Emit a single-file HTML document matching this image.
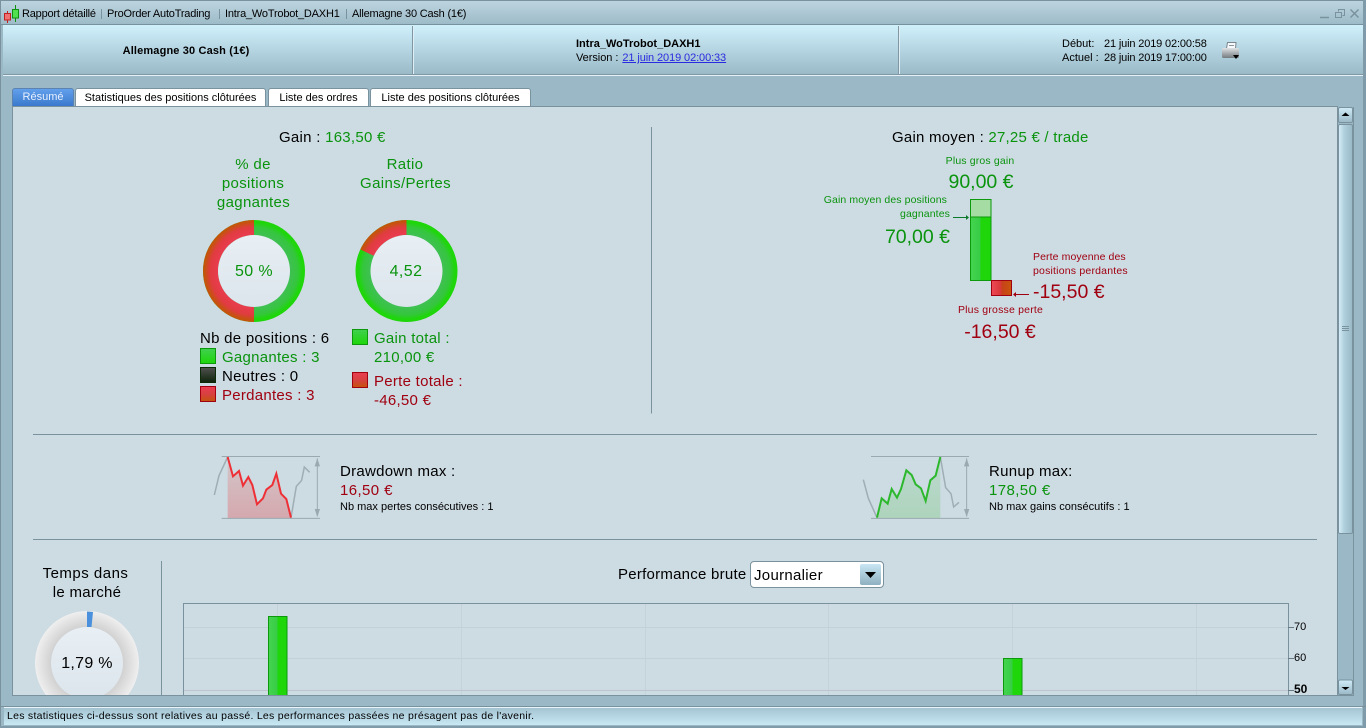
<!DOCTYPE html>
<html lang="fr"><head><meta charset="utf-8"><title>Rapport détaillé</title>
<style>
html,body{margin:0;padding:0;width:1366px;height:728px;overflow:hidden;background:#9ab8c6;font-family:"Liberation Sans",Arial,sans-serif;color:#000}
.a{position:absolute}
.t{position:absolute;white-space:nowrap;line-height:16px;height:16px}
.c{text-align:center;transform:translateX(-50%)}
.r{transform:translateX(-100%)}
.g{color:#0a940e}.d{color:#a00010}
.m{font-size:15px;letter-spacing:.27px}
.s{font-size:10.500px;letter-spacing:.1px}
.b{font-size:19.500px}
.h{font-size:11px;letter-spacing:-.2px}
.tab{position:absolute;top:88px;height:18px;box-sizing:border-box;border:1px solid #7a929e;border-bottom:none;border-radius:3px 3px 0 0;background:#fff;font-size:11px;line-height:18px;text-align:center}
</style></head><body>
<div class="a" style="left:0;top:0;width:1366px;height:728px;background:#9ab8c6"></div>
<div class="a" style="left:0;top:0;width:1366px;height:24px;background:linear-gradient(#bcd4df,#9ebbc9);border-top:1px solid #7a929e;box-sizing:border-box"></div>
<div class="a" style="left:0;top:24px;width:1366px;height:1px;background:#76909c"></div>
<div class="a" style="left:3px;top:25px;width:1360px;height:49px;background:linear-gradient(#d0f0fc,#9bbac8)"></div>
<div class="a" style="left:3px;top:74px;width:1360px;height:1px;background:#7f98a4"></div>
<div class="a" style="left:3px;top:75px;width:1360px;height:1px;background:#e4f2f8"></div>
<div class="a" style="left:412px;top:26px;width:1px;height:48px;background:#7f98a4;border-right:1px solid #e0eff6"></div>
<div class="a" style="left:898px;top:26px;width:1px;height:48px;background:#7f98a4;border-right:1px solid #e0eff6"></div>
<div class="a" style="left:0;top:0;width:1px;height:728px;background:#7a929e"></div>
<div class="a" style="left:1363px;top:0;width:3px;height:728px;background:#7f9aa8"></div>
<div class="a" style="left:0;top:726px;width:1366px;height:2px;background:#7f9aa8"></div>

<!-- title bar -->
<svg class="a" style="left:0;top:0" width="24" height="24"><path d="M7.500 11v12" stroke="#c02020"/><rect x="4.500" y="13.500" width="6" height="6.500" fill="#f07070" stroke="#c02020"/><path d="M15.500 5v17" stroke="#109010"/><rect x="12.500" y="9.500" width="6" height="8.500" fill="#50e050" stroke="#109010"/></svg>
<div class="t h" style="left:22px;top:6px">Rapport détaillé</div>
<div class="a" style="left:101px;top:9px;width:1px;height:10px;background:#7a929e"></div>
<div class="t h" style="left:107px;top:6px">ProOrder AutoTrading</div>
<div class="a" style="left:219px;top:9px;width:1px;height:10px;background:#7a929e"></div>
<div class="t h" style="left:225px;top:6px">Intra_WoTrobot_DAXH1</div>
<div class="a" style="left:346px;top:9px;width:1px;height:10px;background:#7a929e"></div>
<div class="t h" style="left:352px;top:6px">Allemagne 30 Cash (1€)</div>
<svg class="a" style="left:1315px;top:5px" width="48" height="16" fill="none" stroke="#7a929e" stroke-width="1.500"><path d="M5 12.500h9"/><path d="M23.500 6.500v-2h6v6h-2M20.500 7.500h6v5h-6z" stroke-width="1"/><path d="M35.500 4.500l8 8M43.500 4.500l-8 8"/></svg>

<!-- header -->
<div class="t c" style="left:186px;top:43px;font-size:11px;font-weight:bold;letter-spacing:.15px">Allemagne 30 Cash (1€)</div>
<div class="t" style="left:576px;top:36px;font-size:11px;font-weight:bold">Intra_WoTrobot_DAXH1</div>
<div class="t" style="left:576px;top:50px;font-size:11px;letter-spacing:-.05px">Version : <span style="color:#2a2ae0;text-decoration:underline;letter-spacing:-.1px;margin-left:1px">21 juin 2019 02:00:33</span></div>
<div class="t" style="left:1062px;top:36px;font-size:11px">Début:</div>
<div class="t" style="left:1104px;top:36px;font-size:11px;letter-spacing:-.15px">21 juin 2019 02:00:58</div>
<div class="t" style="left:1062px;top:50px;font-size:11px">Actuel :</div>
<div class="t" style="left:1104px;top:50px;font-size:11px;letter-spacing:-.15px">28 juin 2019 17:00:00</div>
<svg class="a" style="left:1220px;top:41px" width="22" height="20"><defs><linearGradient id="pb" x1="0" y1="0" x2="0" y2="1"><stop offset="0" stop-color="#dfe3e5"/><stop offset=".55" stop-color="#a2a8ab"/><stop offset="1" stop-color="#747b7e"/></linearGradient></defs><path d="M7.500 1.500h8.500l-.5 6h-9z" fill="#f6f8f9" stroke="#7a868d"/><path d="M9 4.500h5" stroke="#8b979e"/><rect x="2" y="7" width="17" height="10" rx="1.500" fill="url(#pb)"/><path d="M13 14h6l-3 4z" fill="#000"/></svg>

<!-- tabs -->
<div class="tab" style="left:12px;width:62px;background:linear-gradient(#62a0ec,#3a78cc);border-color:#5b82b0;color:#e8f0ff;line-height:16px">Résumé</div>
<div class="tab" style="left:75px;width:191px">Statistiques des positions clôturées</div>
<div class="tab" style="left:268px;width:101px">Liste des ordres</div>
<div class="tab" style="left:370px;width:161px">Liste des positions clôturées</div>

<!-- panel -->
<div class="a" style="left:12px;top:106px;width:1326px;height:590px;box-sizing:border-box;background:#cddbe3;border:1px solid #7a929e"></div>
<div class="a" style="left:1338px;top:107px;width:15px;height:588px;background:#9ab8c6;border-right:1px solid #7a929e;box-sizing:content-box"></div>
<div class="a" style="left:12px;top:695px;width:1342px;height:1px;background:#7a929e"></div>

<svg class="a" style="left:0;top:0" width="1366" height="728">
<defs>
<clipPath id="p"><rect x="13" y="107" width="1325" height="588"/></clipPath>
<radialGradient id="g1" gradientUnits="userSpaceOnUse" cx="254" cy="271" r="51"><stop offset=".7" stop-color="#40c054"/><stop offset=".86" stop-color="#34c63c"/><stop offset=".95" stop-color="#1ed60a"/><stop offset="1" stop-color="#1ed60a"/></radialGradient>
<radialGradient id="r1" gradientUnits="userSpaceOnUse" cx="254" cy="271" r="51"><stop offset=".7" stop-color="#ea3c50"/><stop offset=".86" stop-color="#e03c40"/><stop offset=".97" stop-color="#c4540c"/><stop offset="1" stop-color="#c4540c"/></radialGradient>
<radialGradient id="g2" gradientUnits="userSpaceOnUse" cx="406.500" cy="271" r="51"><stop offset=".7" stop-color="#40c054"/><stop offset=".86" stop-color="#34c63c"/><stop offset=".95" stop-color="#1ed60a"/><stop offset="1" stop-color="#1ed60a"/></radialGradient>
<radialGradient id="r2" gradientUnits="userSpaceOnUse" cx="406.500" cy="271" r="51"><stop offset=".7" stop-color="#ea3c50"/><stop offset=".86" stop-color="#e03c40"/><stop offset=".97" stop-color="#c4540c"/><stop offset="1" stop-color="#c4540c"/></radialGradient>
<radialGradient id="rw" cx=".5" cy=".5" r=".5"><stop offset=".68" stop-color="#d0d0d0"/><stop offset="1" stop-color="#efefef"/></radialGradient>
<linearGradient id="in" x1="0" y1="0" x2="0" y2="1"><stop offset="0" stop-color="#e8eff5"/><stop offset="1" stop-color="#dbe5eb"/></linearGradient>
<linearGradient id="sg" x1="0" y1="0" x2="0" y2="1"><stop offset="0" stop-color="#40d050"/><stop offset="1" stop-color="#1ed60a"/></linearGradient>
<linearGradient id="sr" x1="0" y1="0" x2="0" y2="1"><stop offset="0" stop-color="#ea3c50"/><stop offset=".5" stop-color="#d84040"/><stop offset="1" stop-color="#c4540c"/></linearGradient>
<linearGradient id="sk" x1="0" y1="0" x2="0" y2="1"><stop offset="0" stop-color="#505050"/><stop offset="1" stop-color="#0e240a"/></linearGradient>
<linearGradient id="bg" x1="0" y1="0" x2="1" y2="0"><stop offset="0" stop-color="#46d450"/><stop offset=".48" stop-color="#36cc44"/><stop offset=".5" stop-color="#1ed60a"/><stop offset="1" stop-color="#1ed60a"/></linearGradient>
<linearGradient id="br" x1="0" y1="0" x2="1" y2="0"><stop offset="0" stop-color="#ee4858"/><stop offset=".48" stop-color="#d83838"/><stop offset=".5" stop-color="#c8401c"/><stop offset="1" stop-color="#c8560c"/></linearGradient>
<linearGradient id="ar" x1="0" y1="0" x2="0" y2="1"><stop offset="0" stop-color="#d8a8a8" stop-opacity=".4"/><stop offset="1" stop-color="#d4a8ae"/></linearGradient>
<linearGradient id="ag" x1="0" y1="0" x2="0" y2="1"><stop offset="0" stop-color="#a8d4b8" stop-opacity=".4"/><stop offset="1" stop-color="#aed4bc"/></linearGradient>
<linearGradient id="sb" x1="0" y1="0" x2="1" y2="0"><stop offset="0" stop-color="#d8eef8"/><stop offset=".4" stop-color="#b0d0de"/><stop offset="1" stop-color="#9ab8c6"/></linearGradient>
<linearGradient id="sq" x1="0" y1="0" x2="0" y2="1"><stop offset="0" stop-color="#d0ecf8"/><stop offset="1" stop-color="#9ab8c6"/></linearGradient>
</defs>

<!-- donut 1 -->
<circle cx="254" cy="271" r="51" fill="url(#g1)"/>
<path d="M254 220A51 51 0 0 0 254 322V307A36 36 0 0 1 254 235Z" fill="url(#r1)"/>
<circle cx="254" cy="271" r="36" fill="url(#in)"/>
<!-- donut 2 -->
<circle cx="406.500" cy="271" r="51" fill="url(#g2)"/>
<path d="M406.500 220A51 51 0 0 0 360.300 249.500L373.900 255.800A36 36 0 0 1 406.500 235Z" fill="url(#r2)"/>
<circle cx="406.500" cy="271" r="36" fill="url(#in)"/>

<!-- swatches -->
<rect x="200.500" y="348.500" width="15" height="15" fill="url(#sg)" stroke="#0c9a0c"/>
<rect x="200.500" y="367.500" width="15" height="15" fill="url(#sk)" stroke="#0a2a08"/>
<rect x="200.500" y="386.500" width="15" height="15" fill="url(#sr)" stroke="#a00010"/>
<rect x="352.500" y="329.500" width="15" height="15" fill="url(#sg)" stroke="#0c9a0c"/>
<rect x="352.500" y="372.500" width="15" height="15" fill="url(#sr)" stroke="#a00010"/>

<!-- dividers -->
<path d="M651.500 127V413.500" stroke="#7a929e"/>
<path d="M33 434.500H1317M33 539.500H1317" stroke="#7a929e"/>
<path d="M161.500 561V695" stroke="#7a929e"/>

<!-- bars -->
<rect x="970.500" y="199.500" width="20.500" height="17.500" fill="#a4dca4" stroke="#0c9a0c"/>
<rect x="970.500" y="217" width="20.500" height="63.500" fill="url(#bg)" stroke="#0c9a0c"/>
<rect x="991.500" y="280.500" width="20" height="15" fill="url(#br)" stroke="#a00010"/>
<path d="M953 217.500H967" stroke="#0a7a2a"/><path d="M969 217.500l-3-2.500v5z" fill="#0a7a2a"/>
<path d="M1029 294.500H1016" stroke="#a00010"/><path d="M1013 294.500l3-2.500v5z" fill="#a00010"/>

<!-- drawdown -->
<g transform="translate(205 445) scale(.3333)">
<path d="M68 36L84 94 102 78 114 122 130 96 142 120 156 178 174 160 184 134 202 120 214 86 228 146 244 162 258 218V220H68Z" fill="url(#ar)"/>
<path d="M50 34.500H345M50 220H345" stroke="#9aa8b0" stroke-width="3" fill="none"/>
<path d="M28 150L42 92 68 36M258 218L274 124 290 106 298 66 314 82" stroke="#9fadb4" stroke-width="4.500" fill="none"/>
<path d="M68 36L84 94 102 78 114 122 130 96 142 120 156 178 174 160 184 134 202 120 214 86 228 146 244 162 258 218" stroke="#ee3036" stroke-width="6" fill="none"/>
<path d="M337 40V214" stroke="#9aa8b0" stroke-width="3"/><path d="M337 40l-8 24h16zM337 216l-8-24h16z" fill="#9aa8b0"/>
</g>
<!-- runup -->
<g transform="translate(855 445) scale(.3333)">
<path d="M66 218L80 160 98 176 110 132 126 158 138 132 154 76 170 90 182 118 198 130 212 168 226 106 242 92 256 36V220H66Z" fill="url(#ag)"/>
<path d="M48 34.500H342M48 220H342" stroke="#9aa8b0" stroke-width="3" fill="none"/>
<path d="M25 104L40 160 66 218M256 36L272 128 288 146 296 186 312 172" stroke="#9fadb4" stroke-width="4.500" fill="none"/>
<path d="M66 218L80 160 98 176 110 132 126 158 138 132 154 76 170 90 182 118 198 130 212 168 226 106 242 92 256 36" stroke="#2cb82c" stroke-width="6" fill="none"/>
<path d="M335 40V214" stroke="#9aa8b0" stroke-width="3"/><path d="M335 40l-8 24h16zM335 216l-8-24h16z" fill="#9aa8b0"/>
</g>

<g clip-path="url(#p)">
<!-- market ring -->
<circle cx="87" cy="663" r="52" fill="url(#rw)"/>
<path d="M87 611.500 L93 612 L91.500 627 H87Z" fill="#4a90dc"/>
<circle cx="87" cy="663" r="36" fill="url(#in)"/>
<!-- chart -->
<path d="M277.500 604V695M461.500 604V695M645.500 604V695M828.500 604V695M1012.500 604V695M1196.500 604V695" stroke="#c6d2d9"/>
<path d="M184 627.500H1288M184 658.500H1288" stroke="#c2d0d8"/>
<path d="M184 690.500H1288" stroke="#bcc4cc"/>
<rect x="183.500" y="603.500" width="1105" height="100" fill="none" stroke="#7a929e"/>
<path d="M1288 627.500h6M1288 658.500h6M1288 690.500h6" stroke="#6a7a84"/>
<rect x="268.500" y="616.500" width="18.500" height="90" fill="url(#bg)" stroke="#0c9a0c"/>
<rect x="1003.500" y="658.500" width="18.500" height="50" fill="url(#bg)" stroke="#0c9a0c"/>
</g>

<!-- scrollbar -->
<rect x="1338.500" y="107.500" width="14" height="15" rx="1.500" fill="url(#sq)" stroke="#7a929e"/>
<path d="M1345.500 112.500l-4 3.500h8z" fill="#000"/>
<rect x="1338.500" y="124.500" width="14" height="409" rx="1.500" fill="url(#sb)" stroke="#7a929e"/>
<path d="M1342 326.500h7M1342 328.500h7M1342 330.500h7" stroke="#7a929e"/>
<rect x="1338.500" y="680" width="14" height="14.500" rx="1.500" fill="url(#sq)" stroke="#7a929e"/>
<path d="M1345.500 690l-4-3h8z" fill="#000"/>
</svg>

<!-- left texts -->
<div class="t m" style="left:279px;top:130px">Gain : <span class="g">163,50 €</span></div>
<div class="t c g m" style="left:253px;top:157px;letter-spacing:.35px">% de</div>
<div class="t c g m" style="left:253px;top:176px;letter-spacing:.35px">positions</div>
<div class="t c g m" style="left:253.500px;top:195px;letter-spacing:.35px">gagnantes</div>
<div class="t c g m" style="left:405px;top:157px;letter-spacing:.35px">Ratio</div>
<div class="t c g m" style="left:405.500px;top:176px;letter-spacing:.35px">Gains/Pertes</div>
<div class="t c g" style="left:254px;top:264px;font-size:16px;letter-spacing:.4px">50 %</div>
<div class="t c g" style="left:406px;top:264px;font-size:16px;letter-spacing:.4px">4,52</div>
<div class="t m" style="left:200px;top:331px">Nb de positions : 6</div>
<div class="t g m" style="left:222px;top:350px">Gagnantes : 3</div>
<div class="t m" style="left:222px;top:369px">Neutres : 0</div>
<div class="t d m" style="left:222px;top:388px">Perdantes : 3</div>
<div class="t g m" style="left:374px;top:331px">Gain total :</div>
<div class="t g m" style="left:374px;top:350px">210,00 €</div>
<div class="t d m" style="left:374px;top:374px">Perte totale :</div>
<div class="t d m" style="left:374px;top:393px">-46,50 €</div>

<!-- right texts -->
<div class="t m" style="left:892px;top:130px;letter-spacing:.23px">Gain moyen : <span class="g">27,25 € / trade</span></div>
<div class="t c g s" style="left:980px;top:153px;letter-spacing:.15px">Plus gros gain</div>
<div class="t c g b" style="left:981px;top:174px">90,00 €</div>
<div class="t r g s" style="left:947px;top:192px">Gain moyen des positions</div>
<div class="t r g s" style="left:950px;top:206px">gagnantes</div>
<div class="t r g b" style="left:950px;top:229px">70,00 €</div>
<div class="t d s" style="left:1033px;top:249px">Perte moyenne des</div>
<div class="t d s" style="left:1033px;top:263px;letter-spacing:.2px">positions perdantes</div>
<div class="t d b" style="left:1033px;top:284px">-15,50 €</div>
<div class="t c d s" style="left:1000.500px;top:302px;letter-spacing:.2px">Plus grosse perte</div>
<div class="t c d b" style="left:1000px;top:324px">-16,50 €</div>

<!-- stats -->
<div class="t m" style="left:340px;top:464px">Drawdown max :</div>
<div class="t d m" style="left:340px;top:483px;letter-spacing:.4px">16,50 €</div>
<div class="t" style="left:340px;top:499px;font-size:11px">Nb max pertes consécutives : 1</div>
<div class="t m" style="left:989px;top:464px">Runup max:</div>
<div class="t g m" style="left:989px;top:483px;letter-spacing:.4px">178,50 €</div>
<div class="t" style="left:989px;top:499px;font-size:11px">Nb max gains consécutifs : 1</div>

<!-- bottom -->
<div class="t c m" style="left:85.500px;top:566px;letter-spacing:.5px">Temps dans</div>
<div class="t c m" style="left:87px;top:585px;letter-spacing:.3px">le marché</div>
<div class="t c" style="left:87px;top:656px;font-size:16px;letter-spacing:.3px">1,79 %</div>
<div class="t m" style="left:618px;top:567px;letter-spacing:.25px">Performance brute</div>
<div class="a" style="left:750px;top:561px;width:134px;height:27px;box-sizing:border-box;background:#fff;border:1px solid #7a929e;border-radius:4px"></div>
<div class="t m" style="left:754px;top:568px;letter-spacing:.3px">Journalier</div>
<div class="a" style="left:860px;top:564px;width:21px;height:21px;background:linear-gradient(#c8e6f4,#8fb0c0);border-radius:2px"></div>
<svg class="a" style="left:860px;top:564px" width="21" height="21"><path d="M5 8h11l-5.500 6z" fill="#000"/></svg>
<div class="t" style="left:1294px;top:619px;font-size:11px">70</div>
<div class="t" style="left:1294px;top:650px;font-size:11px">60</div>
<div class="t" style="left:1294px;top:681px;font-size:12px;font-weight:bold">50</div>

<!-- status -->
<div class="a" style="left:4px;top:707px;width:1358px;height:18px;box-sizing:border-box;background:linear-gradient(#a4c4d2,#c8e8f4);border-top:1px solid #e8f4fa"></div>
<div class="a" style="left:0;top:706px;width:1366px;height:1px;background:#7a929e"></div>
<div class="t" style="left:7px;top:708px;font-size:10.500px;letter-spacing:.27px">Les statistiques ci-dessus sont relatives au passé. Les performances passées ne présagent pas de l'avenir.</div>
</body></html>
